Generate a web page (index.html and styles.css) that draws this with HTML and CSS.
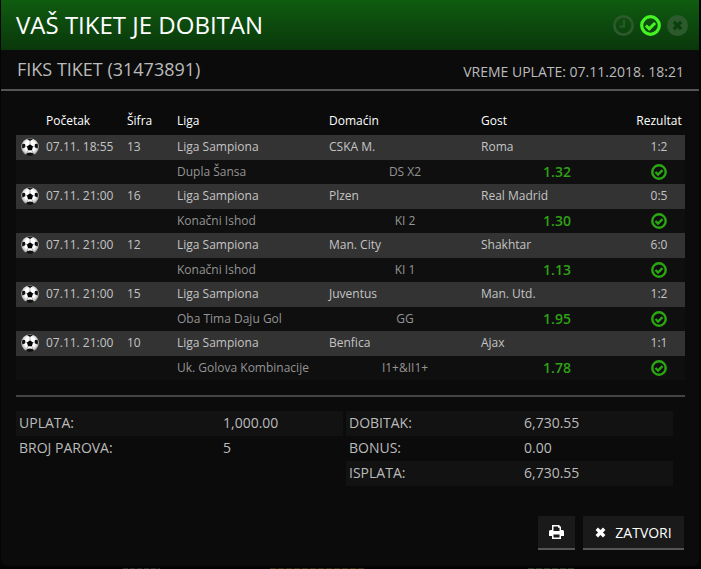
FILE: index.html
```html
<!DOCTYPE html>
<html lang="sr">
<head>
<meta charset="utf-8">
<title>Tiket</title>
<link rel="stylesheet" href="styles.css">
</head>
<body>
<svg class="defs" width="0" height="0" aria-hidden="true">
  <symbol id="ball" viewBox="0 0 20 20">
    <defs>
      <radialGradient id="ballfill" cx="50%" cy="45%" r="55%">
        <stop offset="0.55" stop-color="#fff"/>
        <stop offset="0.85" stop-color="#c4c4c4"/>
        <stop offset="1" stop-color="#6a6a6a"/>
      </radialGradient>
    </defs>
    <circle cx="10" cy="10" r="9.800" fill="url(#ballfill)"/>
    <path d="M10 7l3.400 2.500-1.300 4H7.900l-1.300-4z" fill="#000"/>
    <path d="M6.600 1.100a9.800 9.800 0 0 1 6.800 0L10 3.300zM1.600 6.300l2.900.4.300 3.500-3.200 1.600a9.800 9.800 0 0 1 0-5.500zM18.400 6.300a9.800 9.800 0 0 1 0 5.500l-3.200-1.600.3-3.500zM6.500 17l3.500-1 3.500 1 .9 1.800a9.800 9.800 0 0 1-8.800 0z" fill="#111"/>
    <path d="M10 7V3.300M13.400 9.500l2.100-.9M12.100 13.500l1.400 3.500M7.900 13.500L6.500 17M6.600 9.500l-2.100-.9" stroke="#888" stroke-width=".7"/>
  </symbol>
  <symbol id="check" viewBox="0 0 20 20">
    <circle cx="10" cy="10" r="8.400" fill="none" stroke="currentColor" stroke-width="3"/>
    <path d="M5.600 10l3.200 3.200 5.600-5.600" fill="none" stroke="currentColor" stroke-width="2.900"/>
  </symbol>
</svg>
<main class="modal">
  <header class="modal-head">
    <h1 class="modal-title">VAŠ TIKET JE DOBITAN</h1>
    <div class="status">
      <span class="status-icon status-dim">
        <svg width="21" height="21" viewBox="0 0 20 20"><circle cx="10" cy="10" r="8.700" fill="none" stroke="currentColor" stroke-width="2.600"/><path d="M10.500 4.500v6.500H6" fill="none" stroke="currentColor" stroke-width="1.800"/></svg>
      </span>
      <span class="status-icon status-on">
        <svg width="21" height="21" viewBox="0 0 20 20"><use href="#check"/></svg>
      </span>
      <span class="status-icon status-dim">
        <svg width="21" height="21" viewBox="0 0 20 20"><circle cx="10" cy="10" r="10" fill="currentColor"/><path d="M6.500 6.500l7 7M13.500 6.500l-7 7" stroke="#0b3f0c" stroke-width="3.200"/></svg>
      </span>
    </div>
  </header>
  <div class="ticket-bar">
    <h2 class="ticket-name">FIKS TIKET (31473891)</h2>
    <div class="ticket-time">VREME UPLATE: 07.11.2018. 18:21</div>
  </div>
  <div class="table">
    <div class="row row-head"><span></span><span>Početak</span><span>Šifra</span><span>Liga</span><span>Domaćin</span><span>Gost</span><span class="center">Rezultat</span></div>

    <div class="row row-match"><svg class="ball" width="18" height="18"><use href="#ball"/></svg><span>07.11. 18:55</span><span>13</span><span>Liga Sampiona</span><span>CSKA M.</span><span>Roma</span><span class="center">1:2</span></div>
    <div class="row row-bet"><span></span><span></span><span></span><span>Dupla Šansa</span><span class="center">DS X2</span><span class="odd">1.32</span><svg class="won" width="16" height="16"><use href="#check"/></svg></div>

    <div class="row row-match"><svg class="ball" width="18" height="18"><use href="#ball"/></svg><span>07.11. 21:00</span><span>16</span><span>Liga Sampiona</span><span>Plzen</span><span>Real Madrid</span><span class="center">0:5</span></div>
    <div class="row row-bet"><span></span><span></span><span></span><span>Konačni Ishod</span><span class="center">KI 2</span><span class="odd">1.30</span><svg class="won" width="16" height="16"><use href="#check"/></svg></div>

    <div class="row row-match"><svg class="ball" width="18" height="18"><use href="#ball"/></svg><span>07.11. 21:00</span><span>12</span><span>Liga Sampiona</span><span>Man. City</span><span>Shakhtar</span><span class="center">6:0</span></div>
    <div class="row row-bet"><span></span><span></span><span></span><span>Konačni Ishod</span><span class="center">KI 1</span><span class="odd">1.13</span><svg class="won" width="16" height="16"><use href="#check"/></svg></div>

    <div class="row row-match"><svg class="ball" width="18" height="18"><use href="#ball"/></svg><span>07.11. 21:00</span><span>15</span><span>Liga Sampiona</span><span>Juventus</span><span>Man. Utd.</span><span class="center">1:2</span></div>
    <div class="row row-bet"><span></span><span></span><span></span><span>Oba Tima Daju Gol</span><span class="center">GG</span><span class="odd">1.95</span><svg class="won" width="16" height="16"><use href="#check"/></svg></div>

    <div class="row row-match"><svg class="ball" width="18" height="18"><use href="#ball"/></svg><span>07.11. 21:00</span><span>10</span><span>Liga Sampiona</span><span>Benfica</span><span>Ajax</span><span class="center">1:1</span></div>
    <div class="row row-bet"><span></span><span></span><span></span><span>Uk. Golova Kombinacije</span><span class="center">I1+&amp;II1+</span><span class="odd">1.78</span><svg class="won" width="16" height="16"><use href="#check"/></svg></div>
  </div>
  <div class="summary">
    <div class="sum-col sum-left">
      <div class="sum-row"><span>UPLATA:</span><span>1,000.00</span></div>
      <div class="sum-row"><span>BROJ PAROVA:</span><span>5</span></div>
    </div>
    <div class="sum-col sum-right">
      <div class="sum-row"><span>DOBITAK:</span><span>6,730.55</span></div>
      <div class="sum-row"><span>BONUS:</span><span>0.00</span></div>
      <div class="sum-row"><span>ISPLATA:</span><span>6,730.55</span></div>
    </div>
  </div>
  <div class="actions">
    <button class="btn btn-print" type="button" aria-label="Štampa">
      <svg width="15" height="14" viewBox="0 0 15 14"><path fill="#fff" d="M3 0h7l2 2v3h1.500A1.500 1.500 0 0 1 15 6.500V11h-3v3H3v-3H0V6.500A1.500 1.500 0 0 1 1.500 5H3zm1.500 1.500V6h6V2.800H9V1.500zM4.500 9.500v3h6v-3z"/></svg>
    </button>
    <button class="btn" type="button">
      <svg width="11" height="11" viewBox="0 0 11 11"><path d="M1.800 1.800l7.400 7.400M9.200 1.800l-7.400 7.400" stroke="#fff" stroke-width="3.400"/></svg>
      <span>ZATVORI</span>
    </button>
  </div>
</main>
<div class="backdrop" aria-hidden="true">
  <span class="peek peek-grey"></span>
  <span class="peek peek-olive"></span>
  <span class="peek peek-green"></span>
</div>
</body>
</html>
```
FILE: styles.css
```css
* { box-sizing: border-box; }
html, body { margin: 0; height: 100%; }
body {
  background: #040404;
  font-family: "Open Sans", "Liberation Sans", sans-serif;
  color: #bbb;
  overflow: hidden;
}
.defs { position: absolute; }
.modal {
  width: 698px;
  height: 566px;
  margin-left: 1px;
  background: #0b0b0b;
  border-radius: 0 0 6px 6px;
  overflow: hidden;
}
.modal-head {
  height: 50px;
  background: linear-gradient(#0f5c10, #0a370b);
  display: flex;
  align-items: center;
  justify-content: space-between;
  padding: 0 11px 0 15px;
}
.modal-title { margin: 0; font-size: 24px; font-weight: 400; color: #fff; line-height: 50px; }
.status { display: flex; align-items: center; gap: 6px; padding-top: 1px; }
.status-icon { display: flex; }
.status-dim { color: #2c5a2d; }
.status-on { color: #45f523; }
.ticket-bar {
  height: 41px;
  border-bottom: 2px solid #555;
  display: flex;
  align-items: center;
  justify-content: space-between;
  padding: 0 15px 0 16px;
}
.ticket-name { margin: 0 0 2px; font-size: 18px; font-weight: 400; color: #bbb; }
.ticket-time { font-size: 14px; color: #bbb; padding-top: 3px; }
.table { margin: 20px 14px 0 15px; }
.row {
  display: grid;
  grid-template-columns: 30px 81px 50px 152px 152px 152px 52px;
  align-items: center;
  height: 24.500px;
  font-size: 12px;
  white-space: nowrap;
}
.row-head { color: #fff; height: 24px; padding-bottom: 6px; }
.row-match { background: #333; color: #c4c4c4; padding-bottom: 2px; }
.row-bet { background: #0f0f0f; color: #949494; }
.ball { margin: 2px 0 0 5px; }
.center { text-align: center; }
.odd { text-align: center; color: #2fa115; font-size: 14px; font-weight: 600; }
.won { color: #2aa812; justify-self: center; }
.summary {
  margin: 15px 14px 0 15px;
  padding-top: 14px;
  border-top: 2px solid #444;
  display: flex;
  gap: 3px;
  font-size: 14px;
  height: 106px;
}
.sum-col { width: 327px; }
.sum-row {
  display: grid;
  align-items: center;
  height: 25px;
  padding: 0 0 2px 3px;
}
.sum-left .sum-row { grid-template-columns: 204px 1fr; }
.sum-right .sum-row { grid-template-columns: 175px 1fr; }
.sum-row:nth-child(odd) { background: #121212; }
.actions {
  display: flex;
  justify-content: flex-end;
  gap: 8px;
  margin: 15px 15px 0 0;
}
.btn {
  height: 34px;
  width: 101px;
  border: 0;
  border-bottom: 2px solid #555;
  background: #1a1a1a;
  color: #fff;
  font: 14px "Open Sans", "Liberation Sans", sans-serif;
  display: flex;
  align-items: center;
  justify-content: center;
  gap: 9px;
  padding: 0;
}
.btn-print { width: 37px; }
.backdrop { display: flex; height: 3px; }
.peek { height: 1px; margin-top: 2px; }
.peek-grey { width: 37px; margin-left: 123px; background: repeating-linear-gradient(90deg, #2a2a2a 0 5px, #0a0a0a 5px 7px); }
.peek-olive { width: 96px; margin-left: 110px; background: repeating-linear-gradient(90deg, #332b0c 0 6px, #0a0a0a 6px 8px); }
.peek-green { width: 46px; margin-left: 162px; background: repeating-linear-gradient(90deg, #2a352a 0 6px, #0a180a 6px 8px); }
```
